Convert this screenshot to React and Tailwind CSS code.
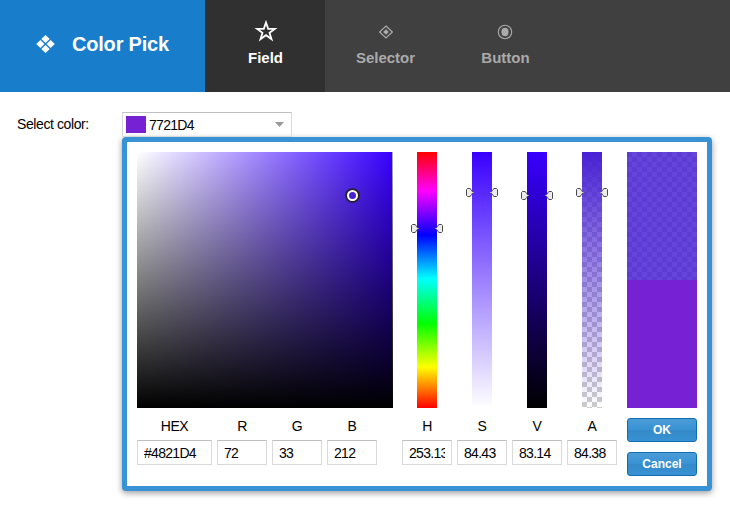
const channels = [
  {
    label: 'H',
    value: '253.13',
    thumb: 'translate-y-[72px]',
    track: 'bg-[linear-gradient(to_bottom,#f00,#f0f_15.2%,#00f_32.5%,#0ff_49.5%,#0f0_67%,#ff0_84%,#f00)]',
  },
  { label: 'S', value: '84.43', thumb: 'translate-y-[36px]', track: 'bg-[linear-gradient(to_bottom,#3800ff,#fff)]' },
  { label: 'V', value: '83.14', thumb: 'translate-y-[39px]', track: 'bg-[linear-gradient(to_bottom,#3800ff,#000)]' },
  {
    label: 'A',
    value: '84.38',
    thumb: 'translate-y-[36px]',
    track:
      'bg-[linear-gradient(to_bottom,#4821d4,#4821d400),repeating-conic-gradient(#fff_0_25%,#ccc_0_50%)] bg-[size:100%_100%,10px_10px]',
  },
];

const inputs = [
  { label: 'HEX', value: '#4821D4', width: 'w-[75px]' },
  { label: 'R', value: '72', width: 'w-[50px]' },
  { label: 'G', value: '33', width: 'w-[50px]' },
  { label: 'B', value: '212', width: 'w-[50px]' },
];

function Thumb({ flip }) {
  return (
    <svg width="8" height="9" viewBox="0 0 8 9" className={flip ? '-scale-x-100' : ''}>
      <path d="M1.5 .5h2.7l1.3 2 1.7 2-1.7 2-1.3 2H1.5l-1-1v-6z" fill="#ececec" stroke="#4a4a4a" />
      <path d="M6.5 4h1v1h-1z" fill="#e8e8a0" />
    </svg>
  );
}

function Slider({ track, thumb }) {
  return (
    <div className={`h-64 w-5 ${track}`}>
      <div className={`-mx-1.5 flex justify-between ${thumb}`}>
        <Thumb />
        <Thumb flip />
      </div>
    </div>
  );
}

function Field({ label, value, width }) {
  return (
    <label className={`block ${width}`}>
      <span className="block h-[22px] text-center text-sm leading-[16px] tracking-[-0.5px]">{label}</span>
      <input
        className="block h-[25px] w-full border border-[#d9d9d9] border-t-[#c0c0c0] bg-white px-1.5 pt-px text-sm leading-4 tracking-[-0.7px] outline-none"
        defaultValue={value}
      />
    </label>
  );
}

function Tab({ icon, label, active }) {
  return (
    <div
      className={`flex h-[92px] w-[120px] flex-col items-center pl-px text-[15px] font-bold ${
        active ? 'bg-[#303030] text-white' : 'text-[#aaa]'
      }`}
    >
      <span className="mt-5 flex h-6 items-start justify-center">{icon}</span>
      <span className="mt-[5px] leading-[18px]">{label}</span>
    </div>
  );
}

const star = (
  <svg width="24" height="22" viewBox="0 0 24 22">
    <path
      d="M12 2.5l2.2 6.4h6.6l-5.3 3.9 2 6.3-5.5-3.9-5.5 3.9 2-6.3-5.3-3.9h6.6z"
      fill="none"
      stroke="currentColor"
      strokeWidth="1.8"
    />
  </svg>
);

const diamond = (
  <svg width="16" height="14" viewBox="0 0 16 14" className="mt-[5px]">
    <path d="M8 1l6.4 6L8 13 1.6 7z" fill="none" stroke="currentColor" strokeWidth="1.2" />
    <path d="M8 4.2l2.9 2.8L8 9.8 5.1 7z" fill="currentColor" />
  </svg>
);

const ring = (
  <svg width="16" height="16" viewBox="0 0 16 16" className="mt-1 -ml-px">
    <circle cx="8" cy="8" r="6.7" fill="none" stroke="currentColor" strokeWidth="1.1" />
    <ellipse cx="8" cy="8" rx="3.6" ry="4.2" fill="currentColor" />
  </svg>
);

export default function App() {
  return (
    <div className="h-[510px] w-[730px] overflow-hidden bg-white font-['Liberation_Sans',Arial,sans-serif] text-sm text-black">
      <header className="flex h-[92px] bg-[#404040]">
        <div className="flex w-[205px] items-center bg-[#187dcb] pb-1 pl-9 text-xl font-bold text-white">
          <svg width="19" height="18" viewBox="0 0 19 18" fill="currentColor">
            <path d="M9.5 0l4.2 4-4.2 4-4.2-4zM9.5 10l4.2 4-4.2 4-4.2-4zM4.4 5l4.1 4-4.1 4L.2 9zM14.6 5l4.2 4-4.2 4-4.1-4z" />
          </svg>
          <span className="ml-[17px] tracking-[-0.2px]">Color Pick</span>
        </div>
        <Tab icon={star} label="Field" active />
        <Tab icon={diamond} label="Selector" />
        <Tab icon={ring} label="Button" />
      </header>

      <main className="pt-5">
        <div className="flex h-[25px] pl-[17px]">
          <span className="w-[105px] leading-[25px] tracking-[-0.4px]">Select color:</span>
          <div className="flex h-[25px] w-[170px] items-center border border-[#d9d9d9] border-t-[#c0c0c0] pr-[7px] pl-[3px]">
            <span className="h-[17px] w-5 bg-[#7721d4]" />
            <span className="ml-[3px] flex-1 pt-0.5 leading-[23px] tracking-[-0.7px]">7721D4</span>
            <svg width="9" height="5" viewBox="0 0 9 5">
              <path d="M0 0h9L4.5 5z" fill="#999" />
            </svg>
          </div>
        </div>

        <section className="ml-[122px] flex h-[354px] w-[590px] rounded-[4px] border-[5px] border-[#3892d3] bg-white p-2.5 shadow-[0_2px_6px_rgba(0,0,0,0.4)]">
          <div className="w-64">
            <div className="relative h-64 bg-[linear-gradient(to_bottom,#aaa,#000),linear-gradient(to_bottom,transparent,#000),linear-gradient(to_right,#fff,#3800ff)] bg-[size:1px_100%,100%_100%,100%_100%] bg-[position:right,center,center] bg-no-repeat">
              <svg className="absolute top-9 left-52" width="15" height="15" viewBox="0 0 15 15">
                <circle cx="7.5" cy="7.5" r="6.3" fill="#4821d4" stroke="#222" strokeWidth="2" />
                <circle cx="7.5" cy="7.5" r="4.5" fill="none" stroke="#fff" strokeWidth="2" />
              </svg>
            </div>
            <div className="mt-2.5 flex gap-[5px]">
              {inputs.map((f) => (
                <Field key={f.label} {...f} />
              ))}
            </div>
          </div>
          <div className="ml-[9px] flex gap-[5px]">
            {channels.map((c) => (
              <div key={c.label} className="flex w-[50px] flex-col items-center">
                <Slider track={c.track} thumb={c.thumb} />
                <div className="mt-2.5">
                  <Field label={c.label} value={c.value} width="w-[50px]" />
                </div>
              </div>
            ))}
          </div>
          <div className="ml-2.5 flex w-[70px] flex-col">
            <div className="h-32 bg-[linear-gradient(#4821d4d7,#4821d4d7),repeating-conic-gradient(#fff_0_25%,#ccc_0_50%)] bg-[size:100%_100%,10px_10px]" />
            <div className="h-32 bg-[#7721d4]" />
            {['OK', 'Cancel'].map((label) => (
              <button
                key={label}
                className="mt-2.5 h-6 rounded-[3px] border border-[#126daf] bg-[linear-gradient(to_bottom,#4b9cd7,#3892d3_50%,#358ac8_51%,#3892d3)] text-xs leading-[22px] font-bold text-white"
              >
                {label}
              </button>
            ))}
          </div>
        </section>
      </main>
    </div>
  );
}
